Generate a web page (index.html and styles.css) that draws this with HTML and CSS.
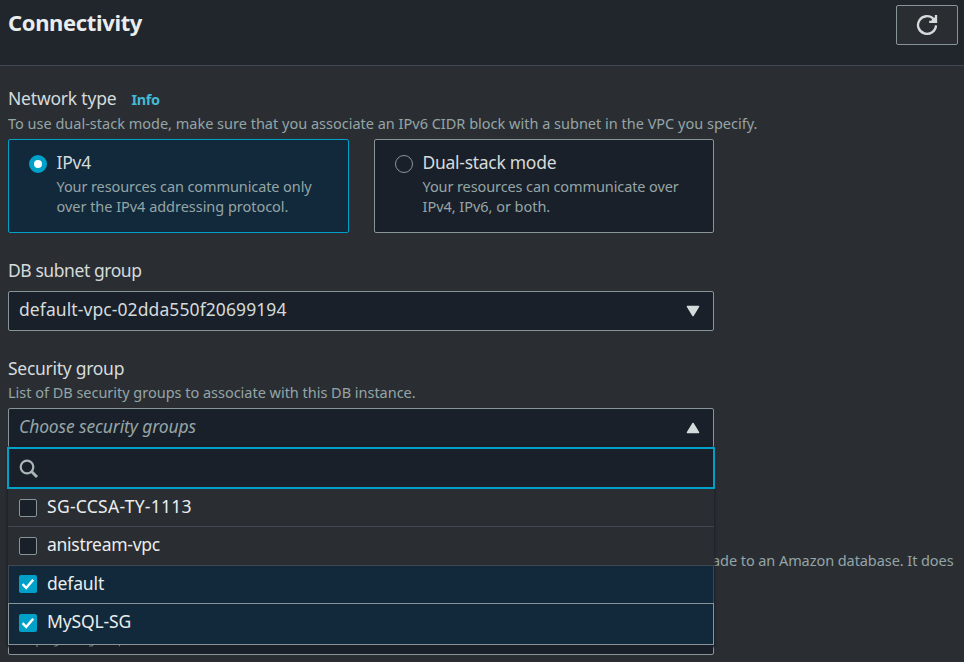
FILE: index.html
```html
<!DOCTYPE html>
<html lang="en">
<head>
<meta charset="utf-8">
<title>Connectivity</title>
<link rel="stylesheet" href="styles.css">
</head>
<body>
<header class="header">
  <h1 class="title"><span>Connectivity</span></h1>
  <button class="refresh" aria-label="Refresh">
    <svg width="22" height="22" viewBox="0 0 22 22"><path d="M20 11.4A9 8.8 0 1 1 17.6 5" fill="none" stroke="#d5dbdb" stroke-width="2.3"/><path d="M20 1V7.8H13.2" fill="none" stroke="#d5dbdb" stroke-width="2.3"/><path d="M16.2 5L19.5 3V7.5H15Z" fill="#d5dbdb"/></svg>
  </button>
</header>
<main class="content">
  <div class="label network"><span class="t-network">Network type</span><a class="info">Info</a></div>
  <p class="hint"><span class="h-network">To use dual-stack mode, make sure that you associate an IPv6 CIDR block with a subnet in the VPC you specify.</span></p>
  <div class="tiles">
    <div class="tile selected">
      <span class="radio"></span>
      <div><div class="label tile-label"><span class="t-ipv4">IPv4</span></div><p class="hint"><span class="h-tile1">Your resources can communicate only</span><br><span class="h-tile2">over the IPv4 addressing protocol.</span></p></div>
    </div>
    <div class="tile">
      <span class="radio"></span>
      <div><div class="label tile-label"><span class="t-dual">Dual-stack mode</span></div><p class="hint"><span class="h-tile3">Your resources can communicate over</span><br><span class="h-tile4">IPv4, IPv6, or both.</span></p></div>
    </div>
  </div>
  <div class="label subnet"><span class="t-subnet">DB subnet group</span></div>
  <div class="select"><span class="t-value">default-vpc-02dda550f20699194</span>
    <svg width="14" height="12" viewBox="0 0 14 12"><path d="M1.5 1.5H12.5L7 10.5Z" fill="#d5dbdb" stroke="#d5dbdb" stroke-width="1.5" stroke-linejoin="round"/></svg>
  </div>
  <div class="label security"><span class="t-security">Security group</span></div>
  <p class="hint hint-security"><span class="h-security">List of DB security groups to associate with this DB instance.</span></p>
  <div class="combo">
    <div class="select open"><span class="t-choose">Choose security groups</span>
      <svg width="14" height="12" viewBox="0 0 14 12"><path d="M1.5 10.5H12.5L7 1.5Z" fill="#d5dbdb" stroke="#d5dbdb" stroke-width="1.5" stroke-linejoin="round"/></svg>
    </div>
    <div class="dropdown">
      <div class="search"><svg width="20" height="20" viewBox="0 0 20 20"><circle cx="8" cy="8" r="6.3" fill="none" stroke="#aab7b8" stroke-width="2.2"/><path d="M12.5 12.5L18 18" stroke="#aab7b8" stroke-width="2.8"/></svg></div>
      <div class="option"><span class="box"></span><span class="t-o1">SG-CCSA-TY-1113</span></div>
      <div class="option"><span class="box"></span><span class="t-o2">anistream-vpc</span></div>
      <div class="option checked"><span class="box"><svg width="18" height="18" viewBox="0 0 18 18"><path d="M3.6 9.2L7.2 13L14.2 4.8" fill="none" stroke="#fff" stroke-width="2.5"/></svg></span><span class="t-o3">default</span></div>
      <div class="option checked active"><span class="box"><svg width="18" height="18" viewBox="0 0 18 18"><path d="M3.6 9.2L7.2 13L14.2 4.8" fill="none" stroke="#fff" stroke-width="2.5"/></svg></span><span class="t-o4">MySQL-SG</span></div>
    </div>
  </div>
  <p class="hint proxy"><span class="h-proxy">ade to an Amazon database. It does</span></p>
  <div class="select lower"><svg width="110" height="3" viewBox="0 0 110 3"><path d="M18 0V2M35 1H37L39 0M70 1H73L74 0M100.500 0V1.200" fill="none" stroke="#95a5a6" stroke-width="1.2" opacity=".7"/></svg></div>
</main>
</body>
</html>
```
FILE: styles.css
```css
* { box-sizing: border-box; }
body { margin: 0; height: 662px; overflow: hidden; background: #2a2e33; color: #d5dbdb; font: 17.5px/24px "Noto Sans", sans-serif; }
p, h1 { margin: 0; }
span { white-space: nowrap; }
.header { height: 66px; background: #21252c; border-bottom: 1px solid #414750; display: flex; justify-content: space-between; padding: 5px 6px 0 8px; }
.title { font-size: 22px; line-height: 34px; font-weight: 700; color: #eaeded; letter-spacing: -.36px; }
.refresh { width: 62px; height: 40px; padding: 0; background: #2a2e33; border: 1px solid #879596; border-radius: 2px; display: flex; align-items: center; justify-content: center; }
.content { padding: 0 8px; }
.label { height: 24px; }
.network { margin-top: 20px; display: flex; gap: 15px; }
.info { color: #44b9d6; font-size: 14.5px; font-weight: 700; line-height: 26px; letter-spacing: -.4px; }
.hint { color: #95a5a6; font-size: 14.5px; line-height: 20px; margin-top: 3px; }
.tiles { display: flex; gap: 25px; width: 706px; margin-top: 6px; }
.tile { width: 341px; height: 94px; border: 1px solid #879596; border-radius: 2px; background: #1a2029; padding: 10px 20px; display: flex; gap: 9.5px; }
.tile + .tile { width: 340px; }
.tile .hint { margin-top: 2px; }
.selected { background: #12293b; border-color: #00a1c9; }
.radio { flex: none; width: 18px; height: 18px; margin-top: 5px; border: 1px solid #879596; border-radius: 50%; }
.selected .radio { border: 5.5px solid #00a1c9; background: #fff; }
.subnet { margin-top: 25px; }
.select { width: 706px; height: 40px; margin-top: 9px; background: #1a2029; border: 1px solid #879596; border-radius: 2px; padding: 0 13px 5px 10px; display: flex; align-items: center; justify-content: space-between; }
.select svg { position: relative; top: 2px; }
.security { margin-top: 25px; }
.hint-security { margin-top: 2px; }
.combo { position: relative; margin-top: 6px; }
.open { margin: 0; font-style: italic; color: #95a5a6; }
.dropdown { position: absolute; z-index: 2; top: 39px; left: 0; width: 706px; background: #2a2e33; box-shadow: 0 1px 2px 1px #1a2029; }
.search { height: 42px; margin: 0 -1px; border: 2px solid #00a1c9; background: #1a2029; padding: 10px; }
.search svg { display: block; }
.option { height: 38px; padding: 0 11px 4px; display: flex; align-items: center; gap: 11px; border-bottom: 1px solid #414750; color: #eaeded; }
.option:nth-child(3) { height: 39px; }
.checked { background: #12293b; border-left: 1px solid #414750; border-right: 1px solid #414750; padding-left: 10px; }
.option.checked:nth-child(4) { height: 37px; border-bottom: 0; }
.option.active { height: 42px; border: 1px solid #879596; padding-bottom: 6px; }
.box { width: 18px; height: 18px; margin: 4px -1px 0 0; border: 1px solid #879596; border-radius: 2px; background: #1a2029; display: flex; flex: none; }
.option:nth-child(n+3) .box { margin-top: 3px; }
.checked .box { border: 0; background: #00a1c9; }
.proxy { margin: 102px -8px 0 0; padding-left: 704px; }
.lower { margin-top: 45px; padding: 0 10px 8px; align-items: flex-end; }
.lower svg { top: 2px; z-index: 3; }

/* Tracking per text run */
.t-network { letter-spacing: -.2px; }
.t-ipv4 { letter-spacing: -.2px; }
.h-tile1, .h-tile3 { letter-spacing: -.1px; }
.h-tile2, .h-tile4 { letter-spacing: -.03px; }
.t-dual { letter-spacing: -.28px; }
.t-subnet { letter-spacing: -.43px; }
.t-value { letter-spacing: .09px; }
.t-security { letter-spacing: -.28px; }
.h-security { letter-spacing: -.02px; }
.t-choose { letter-spacing: -.13px; }
.t-o1 { letter-spacing: .27px; }
.t-o2 { letter-spacing: -.27px; }
.t-o3, .t-o4 { letter-spacing: -.15px; }
.h-proxy { letter-spacing: -.07px; }
```
